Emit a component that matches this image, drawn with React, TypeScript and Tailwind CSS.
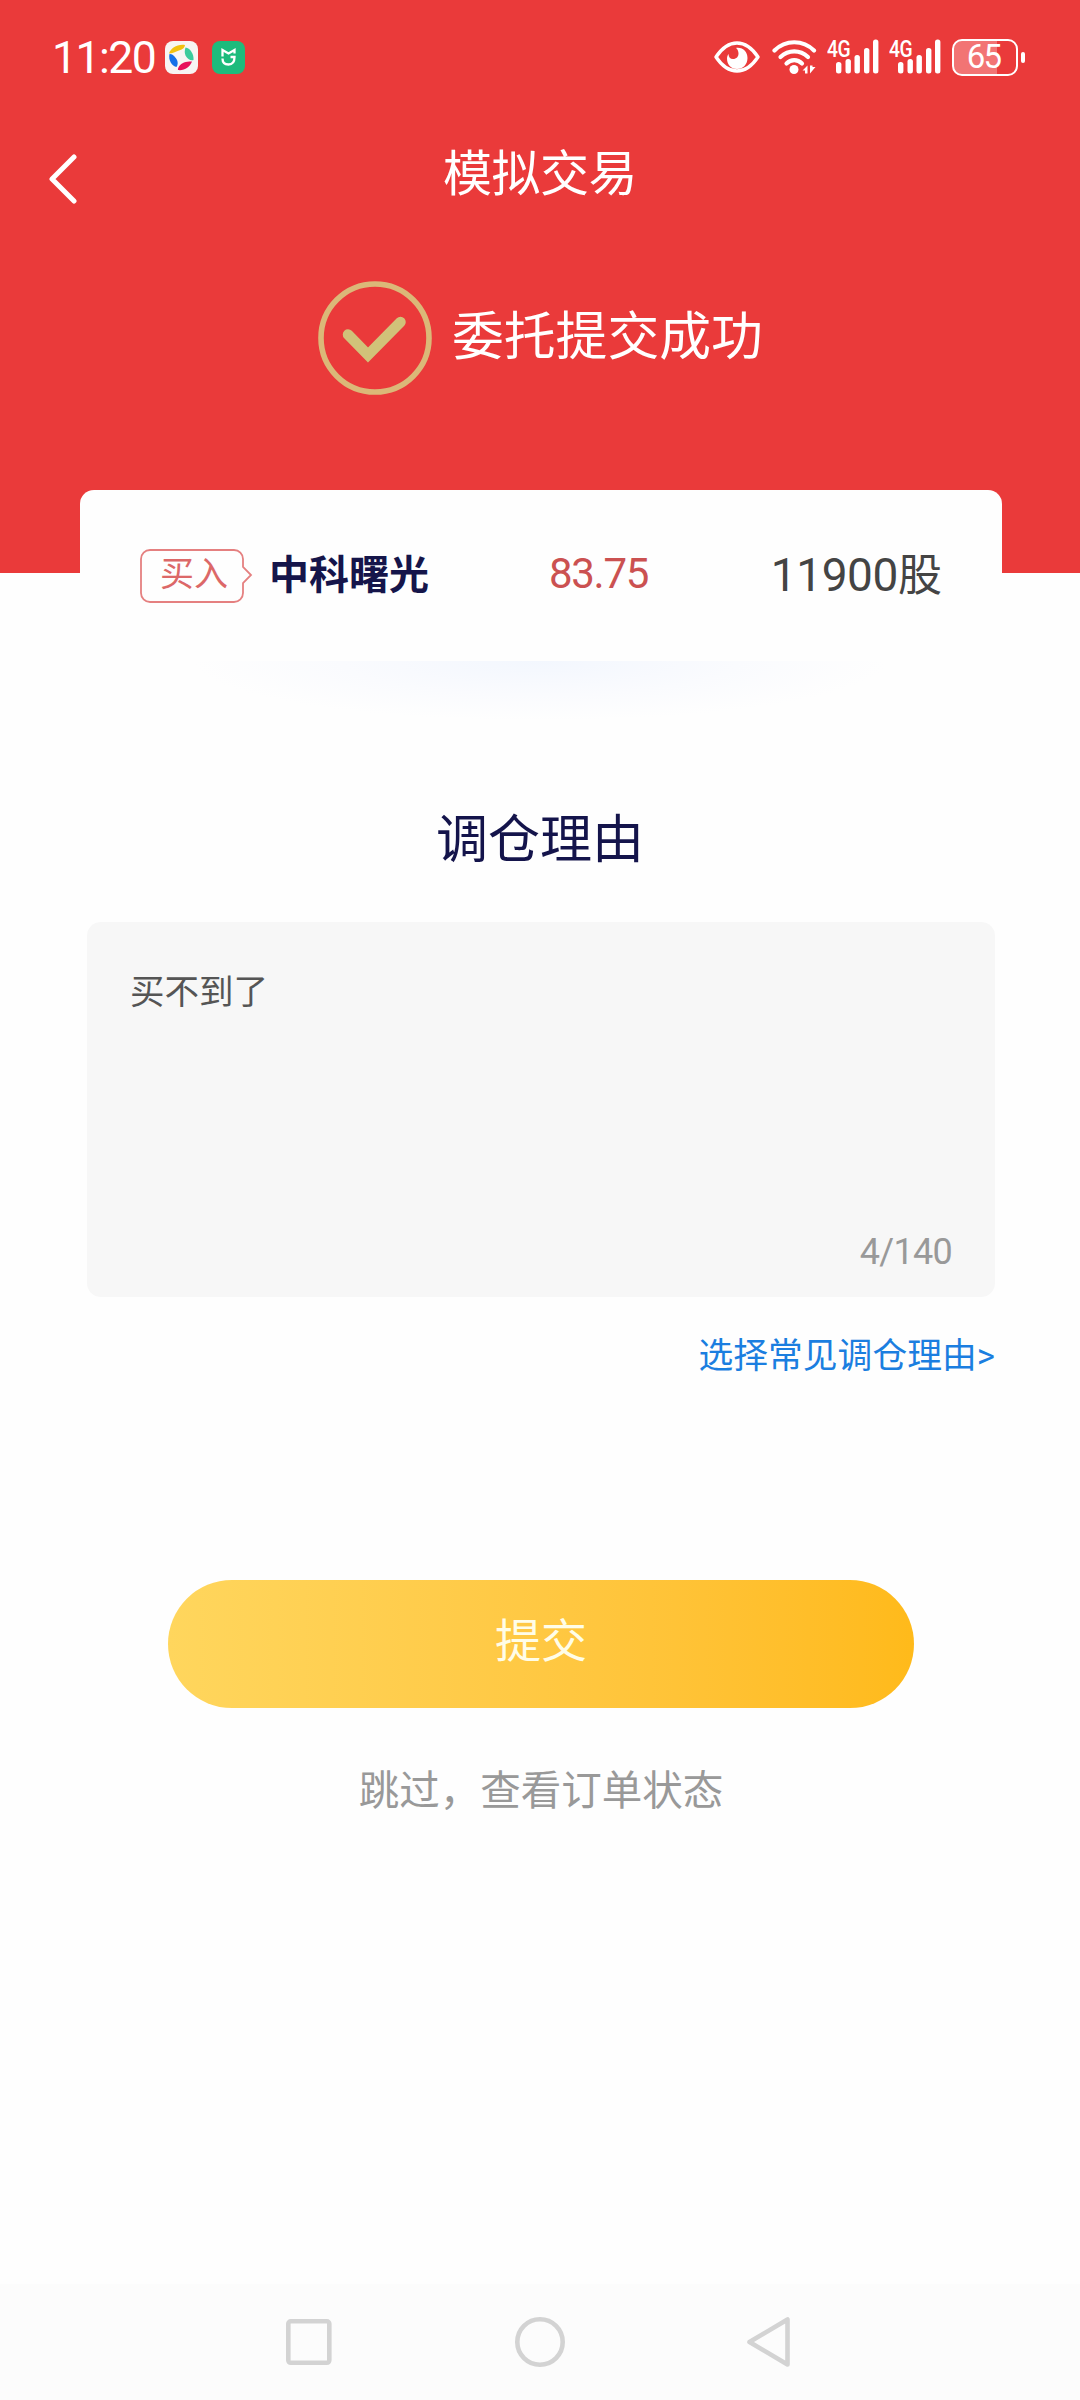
import type { ReactNode } from "react";

const signalBars = [
  { x: 7, top: 22 },
  { x: 16.5, top: 19 },
  { x: 25.5, top: 15 },
  { x: 35, top: 8 },
  { x: 44, top: -0.5 },
];

const order = {
  side: "买入",
  name: "中科曙光",
  price: "83.75",
  amount: "11900",
};

const reason = "买不到了";
const maxLength = 140;

export default function App(): React.JSX.Element {
  return (
    <div className="flex h-[2400px] w-[1080px] flex-col overflow-hidden bg-[#fefefe] font-['Roboto','Noto_Sans_CJK_SC',sans-serif]">
      <header className="h-[573px] shrink-0 bg-[#ea3a3a] text-white">
        <StatusBar />
        <div className="grid h-[122px] grid-cols-[1fr_auto_1fr] items-center">
          <button className="mt-[6px] ml-[46px] w-fit" aria-label="返回">
            <svg width="34" height="52" viewBox="0 0 34 52" fill="none">
              <path d="M28 5 6 27l22 22" stroke="#fff" strokeWidth="5" strokeLinecap="round" strokeLinejoin="round" />
            </svg>
          </button>
          <h1 className="text-[49px] leading-[60px] tracking-[-0.5px]">模拟交易</h1>
        </div>
        <div className="mt-[45px] flex items-center pl-[318px]">
          <svg width="114" height="114" viewBox="0 0 114 114" fill="none">
            <circle cx="57" cy="57" r="54" stroke="#dbb878" strokeWidth="5.600" />
            <path d="m30 53.500 20 20.500 32.500-33" stroke="#d1c279" strokeWidth="10.500" strokeLinecap="round" />
          </svg>
          <p className="ml-[20px] text-[51.800px] leading-[60px]">委托提交成功</p>
        </div>
      </header>

      <section className="relative -mt-[83px] ml-[80px] flex h-[171px] w-[922px] shrink-0 items-center rounded-t-[14px] bg-[#fefefe] px-[60px]">
        <SideTag>{order.side}</SideTag>
        <span className="ml-[16px] text-[40px] leading-[48px] font-bold text-[#15154a]">{order.name}</span>
        <span className="mt-[-3px] ml-[120px] text-[42px] leading-[48px] tracking-[-1.300px] text-[#cb5151]">{order.price}</span>
        <span className="ml-auto text-[44px] leading-[48px] text-[#444]">
          <span className="text-[46px] tracking-[-0.400px]">{order.amount}</span>股
        </span>
      </section>
      <div className="mx-auto h-[60px] w-[700px] shrink-0 bg-[radial-gradient(ellipse_at_top,#f3f7fe_0%,#fafbfe_40%,#fefefe_70%)]" />

      <main className="flex flex-1 flex-col px-[87px]">
        <h2 className="mt-[90px] text-center text-[52px] leading-[60px] text-[#14144b]">调仓理由</h2>
        <div className="mt-[51px] flex h-[375px] w-[908px] flex-col justify-between rounded-[14px] bg-[#f7f7f7] px-[43px] pt-[48px] pb-[25px]">
          <p className="text-[34.500px] leading-[44px] text-[#555]">{reason}</p>
          <p className="text-right text-[36px] leading-[40px] tracking-[-0.7px] text-[#999]">
            {reason.length}/{maxLength}
          </p>
        </div>
        <a className="mt-[37px] w-[908px] text-right text-[34.800px] leading-[44px] text-[#1b7ee0]">选择常见调仓理由&gt;</a>
        <button className="mt-[202px] ml-[81px] h-[128px] w-[746px] rounded-full bg-linear-to-r from-[#ffd65d] to-[#ffba1a] pb-[5px] text-[46px] text-[#fffde8]">
          提交
        </button>
        <a className="mt-[58px] pl-[2px] text-center text-[40.500px] leading-[50px] text-[#999]">跳过，查看订单状态</a>
      </main>

      <NavigationBar />
    </div>
  );
}

function StatusBar(): React.JSX.Element {
  return (
    <div className="flex h-[114px] items-center justify-between pr-[55px] pl-[52px]">
      <div className="flex items-center">
        <span className="w-[113px] pt-[2px] text-[44.500px] leading-[50px] tracking-[-1.500px]">11:20</span>
        <svg width="33" height="33" viewBox="0 0 33 33">
          <rect width="33" height="33" rx="8" fill="#f7f5f3" />
          <path d="M4 12.500C6 7 12 3 20 4c0 2-2 4.500-6 5.500C10 11 8 12.500 4 12.500Z" fill="#f2c10f" />
          <path d="M20.500 6.500C25 7 29 13 28.500 19c-2.500 1-6-.5-8-4.500-1-2.500-1-5 0-8Z" fill="#3bcb9c" />
          <path d="M27 20.500C25 26 19 30 13 29c-.5-2 2-6 6-7.500 2.500-1 4-1 8-1Z" fill="#e8125c" />
          <path d="M11.500 26C7 25.500 3 19 4.500 13c3-.5 6 3 7.500 6 1 2.500 1 4.500-.5 7Z" fill="#1470e8" />
        </svg>
        <svg className="ml-[14px]" width="33" height="33" viewBox="0 0 33 33" fill="none">
          <rect width="33" height="33" rx="8" fill="#1dbb7c" />
          <path d="M10.500 15.500V9l6 3.500 6-3.500v3.500" stroke="#fff" strokeWidth="2.300" />
          <path d="M10.500 17.500c0 4 2.500 6 6 6s6-2.500 6-7.500h-4" stroke="#fff" strokeWidth="2.300" />
        </svg>
      </div>

      <div className="flex items-center">
        <svg width="46" height="32" viewBox="0 0 46 32" fill="none">
          <path d="M2 16C8 7 15 2 23 2s15 5 21 14c-6 9-13 14-21 14S8 25 2 16Z" stroke="#fff" strokeWidth="3.400" strokeLinejoin="round" />
          <path d="M22 7c7-1 11.500 4 11.500 10 0 6.500-4.500 11-10.500 11s-10-4.500-10-10.500c0-1.800.5-3 1.500-4.500 0 3 1.800 5 4.500 5 3.500 0 5.500-2.500 5.500-5.500 0-2-.8-4.300-2.500-5.500Z" fill="#fff" />
        </svg>
        <svg className="ml-[12px]" width="45" height="36" viewBox="0 0 45 36" fill="none">
          <g stroke="#fff" strokeWidth="4.200" strokeLinecap="round">
            <path d="M2.500 11.500c11-11 28.500-11 39.500 0" />
            <path d="M8.500 18c8-7.500 19.500-7.500 27.500 0" />
            <path d="M14.500 24.500c4.500-4.500 11-4.500 15.500 0" />
          </g>
          <circle cx="22" cy="30.500" r="4.500" fill="#fff" />
          <path d="m30.500 31.500 5-5v8h-2.500v-3h-2.500ZM38 26.500v8l5.500-6.500h-3v-1.500H38Z" fill="#fff" />
        </svg>
        <Signal className="ml-[12px]" />
        <Signal className="ml-[12px]" />
        <div className="ml-[11px] flex items-center">
          <div className="flex h-[37px] w-[66px] items-center justify-center rounded-[10px] border-[2.500px] border-white bg-[linear-gradient(90deg,#f27474_0_70%,transparent_70%)]">
            <span className="pr-[3px] text-[33px] leading-[32px] tracking-[-1.800px]">65</span>
          </div>
          <div className="ml-[3px] h-[11px] w-[4px] rounded-[2px] bg-white" />
        </div>
      </div>
    </div>
  );
}

function Signal({ className }: { className: string }): React.JSX.Element {
  return (
    <div className={`relative h-[34px] w-[50px] ${className}`}>
      <span className="absolute -top-px -left-[2px] origin-left scale-x-[0.82] text-[23.500px] leading-[20px] font-medium tracking-[-0.500px]">4G</span>
      <svg className="overflow-visible" width="50" height="34" viewBox="0 0 50 34">
        {signalBars.map((bar) => (
          <rect key={bar.x} x={bar.x} y={bar.top} width="5.400" height={33.5 - bar.top} rx="2.500" fill="#fff" />
        ))}
      </svg>
    </div>
  );
}

function SideTag({ children }: { children: ReactNode }): React.JSX.Element {
  return (
    <div className="relative flex h-[54px] w-[113px] shrink-0 items-center">
      <svg className="absolute inset-0" width="113" height="54" viewBox="0 0 113 54" fill="none">
        <path
          d="M10 1h84a9 9 0 0 1 9 9v8l8 8-8 8v10a9 9 0 0 1-9 9H10a9 9 0 0 1-9-9V10a9 9 0 0 1 9-9Z"
          stroke="#e58080"
          strokeWidth="1.800"
        />
      </svg>
      <span className="relative -mt-[3px] pl-[20px] text-[34px] leading-[40px] text-[#dc6868]">{children}</span>
    </div>
  );
}

function NavigationBar(): React.JSX.Element {
  return (
    <nav className="flex h-[116px] shrink-0 items-center bg-[#fcfcfc] pl-[284px]">
      <svg width="50" height="52" viewBox="0 0 50 52" fill="none" stroke="#d3d3d3" strokeWidth="4.600">
        <rect x="4.300" y="5.300" width="41" height="41.500" rx="2.500" />
      </svg>
      <svg className="ml-[180px]" width="52" height="52" viewBox="0 0 52 52" fill="none" stroke="#d3d3d3" strokeWidth="4.600">
        <circle cx="26" cy="26" r="22.700" />
      </svg>
      <svg className="ml-[180px]" width="46" height="52" viewBox="0 0 46 52" fill="none" stroke="#d3d3d3" strokeWidth="4.600" strokeLinejoin="round">
        <path d="M41.500 3.500v45L3.500 26l38-22.500Z" />
      </svg>
    </nav>
  );
}
